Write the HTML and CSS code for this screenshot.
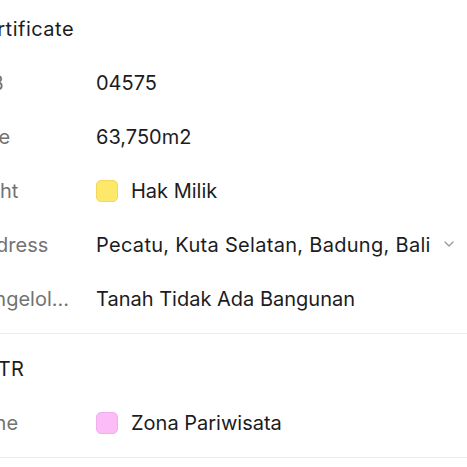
FILE: index.html
```html
<!DOCTYPE html>
<html>
<head>
<meta charset="utf-8">
<link rel="stylesheet" href="styles.css">
</head>
<body>
<div class="panel">
  <section class="section">
    <div class="heading">Certificate</div>
    <div class="row"><div class="label">NIB</div><div class="value">04575</div></div>
    <div class="row"><div class="label">Size</div><div class="value">63,750m2</div></div>
    <div class="row"><div class="label">Right</div><div class="value"><span class="swatch yellow"></span>Hak Milik</div></div>
    <div class="row"><div class="label">Address</div><div class="value"><span class="addr">Pecatu, Kuta Selatan, Badung, Bali</span><svg class="chev" width="10" height="6" viewBox="0 0 10 6"><path d="M1 1l4 4 4-4" fill="none" stroke="#9a9a9a" stroke-width="1.3" stroke-linecap="round" stroke-linejoin="round"/></svg></div></div>
    <div class="row"><div class="label">Pengelolaan</div><div class="value">Tanah Tidak Ada Bangunan</div></div>
  </section>
  <section class="section">
    <div class="heading">RDTR</div>
    <div class="row"><div class="label">Zone</div><div class="value"><span class="swatch pink"></span>Zona Pariwisata</div></div>
  </section>
</div>
</body>
</html>
```
FILE: styles.css
```css
html, body {
  margin: 0;
  padding: 0;
  background: #ffffff;
  overflow: hidden;
}
body {
  font-family: Inter, "Noto Sans", sans-serif;
  font-size: 20px;
  color: #1c1c1e;
}
.panel {
  margin-left: -30px;
  margin-top: -6px;
  width: 497px;
}
.section {
  padding: 8px 0 7px;
  border-bottom: 1px solid #ececec;
}
.heading {
  height: 54px;
  display: flex;
  align-items: center;
  font-weight: 400;
  letter-spacing: 0.5px;
  color: #1c1c1e;
}
.row {
  height: 54px;
  display: flex;
  align-items: center;
}
.label {
  width: 100px;
  margin-right: 26px;
  flex: none;
  color: #737373;
  white-space: nowrap;
  overflow: hidden;
  text-overflow: ellipsis;
}
.value {
  display: flex;
  align-items: center;
  white-space: nowrap;
  color: #1c1c1e;
}
.addr {
  letter-spacing: 0.3px;
}
.swatch {
  width: 22px;
  height: 22px;
  border-radius: 5px;
  margin-right: 13px;
  box-sizing: border-box;
}
.yellow {
  background: #fde86a;
  border: 1px solid #f2d75a;
}
.pink {
  background: #fbbcf8;
  border: 1px solid #f0aef0;
}
.chev {
  margin-left: 13px;
  margin-top: -2px;
}
```
